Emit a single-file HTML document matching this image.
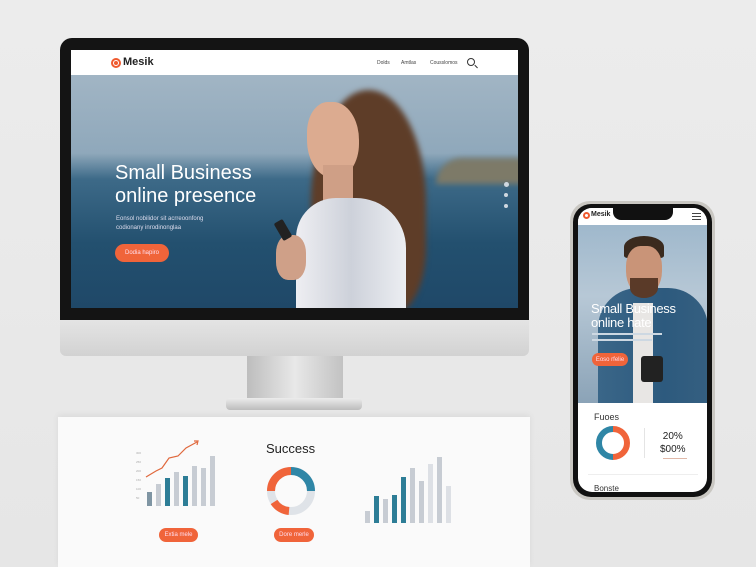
<!DOCTYPE html>
<html><head><meta charset="utf-8"><style>
*{margin:0;padding:0;box-sizing:border-box}
body{width:756px;height:567px;background:linear-gradient(180deg,#ececec,#e6e6e6);position:relative;overflow:hidden;font-family:"Liberation Sans",sans-serif}
.abs{position:absolute}
.btn{position:absolute;background:#f0643a;color:#fde;border-radius:12px;font-size:6px;display:flex;align-items:center;justify-content:center}
</style></head><body>
<!-- monitor -->
<div class="abs" style="left:60px;top:38px;width:469px;height:284px;background:#141414;border-radius:12px 12px 0 0"></div>
<div class="abs" style="left:60px;top:320px;width:469px;height:36px;background:linear-gradient(#e4e4e4,#d2d2d2);border-radius:0 0 6px 6px"></div>
<div class="abs" style="left:247px;top:356px;width:96px;height:44px;background:linear-gradient(90deg,#bdbdbd,#e8e8e8 50%,#c2c2c2)"></div>
<div class="abs" style="left:226px;top:398px;width:136px;height:12px;background:linear-gradient(#ececec,#bcbcbc);border-radius:4px"></div>
<div class="abs" style="left:71px;top:50px;width:447px;height:258px;overflow:hidden;background:linear-gradient(180deg,#a7b9c7 0%,#8fa8bb 40%,#3d6a88 50%,#23506f 75%,#1f4868 100%)">
 <div class="abs" style="left:0;top:0;width:447px;height:25px;background:#fff"></div>
 <div class="abs" style="left:40px;top:8px;width:10px;height:10px;border-radius:50%;border:2.5px solid #ef5a2f"></div>
 <div class="abs" style="left:43px;top:11px;width:4px;height:4px;border-radius:50%;background:#ef5a2f"></div>
 <div class="abs" style="left:52px;top:6px;font-size:11px;font-weight:bold;color:#222">Mesik</div>
 <div class="abs" style="left:306px;top:10px;font-size:5px;color:#444">Dolds</div>
 <div class="abs" style="left:330px;top:10px;font-size:5px;color:#444">Amtlas</div>
 <div class="abs" style="left:359px;top:10px;font-size:5px;color:#444">Cousslomos</div>
 <div class="abs" style="left:396px;top:8px;width:8px;height:8px;border-radius:50%;border:1.3px solid #333"></div>
 <div class="abs" style="left:403px;top:16px;width:4px;height:1.4px;background:#333;transform:rotate(45deg)"></div>
 <div class="abs" style="left:365px;top:108px;width:100px;height:26px;background:#7d7a68;border-radius:40px 30px 0 0;filter:blur(3px)"></div>
 <!-- woman -->
 <div class="abs" style="left:240px;top:40px;width:115px;height:225px;background:#5e3d28;border-radius:50% 50% 30% 50%;filter:blur(3px)"></div>
 <div class="abs" style="left:236px;top:52px;width:52px;height:76px;background:#dcab90;border-radius:40% 50% 45% 50%"></div>
 <div class="abs" style="left:252px;top:115px;width:30px;height:40px;background:#cf9f86"></div>
 <div class="abs" style="left:225px;top:148px;width:110px;height:120px;background:linear-gradient(90deg,#eeeef2,#cdd1da,#eceef2);border-radius:40px 50px 0 0"></div>
 <div class="abs" style="left:205px;top:185px;width:30px;height:45px;background:#cfa088;border-radius:40%"></div>
 <div class="abs" style="left:207px;top:170px;width:10px;height:20px;background:#222;border-radius:2px;transform:rotate(-30deg)"></div>
 <div class="abs" style="left:44px;top:112px;font-size:20px;color:#fff;line-height:23px">Small Business<br>online presence</div>
 <div class="abs" style="left:45px;top:165px;font-size:6px;color:#dde;line-height:9px">Eonsol nobilidor sit acrreoonfong<br>codionany inrodinonglaa</div>
 <div class="btn" style="left:44px;top:194px;width:54px;height:18px;border-radius:9px">Dodia hapiro</div>
 <div class="abs" style="left:433px;top:132px;width:5px;height:5px;border-radius:50%;background:#cfd8e0"></div>
 <div class="abs" style="left:433px;top:143px;width:4px;height:4px;border-radius:50%;background:#cfd8e0"></div>
 <div class="abs" style="left:433px;top:154px;width:4px;height:4px;border-radius:50%;background:#cfd8e0"></div>
</div>
<!-- bottom panel -->
<div class="abs" style="left:58px;top:417px;width:472px;height:150px;background:#fafafa;box-shadow:0 -2px 6px rgba(0,0,0,.06)"></div>
<svg class="abs" style="left:130px;top:438px" width="90" height="80">
 <g fill="#aaa" font-size="3" font-family="Liberation Sans"><text x="6" y="16">300</text><text x="6" y="25">250</text><text x="6" y="34">200</text><text x="6" y="43">150</text><text x="6" y="52">100</text><text x="6" y="61">50</text></g>
 <g fill="#c7ccd3"><rect x="17" y="54" width="5" height="14" fill="#7f95a3"/><rect x="26" y="46" width="5" height="22"/><rect x="35" y="40" width="5" height="28" fill="#2d7d96"/><rect x="44" y="34" width="5" height="34"/><rect x="53" y="38" width="5" height="30" fill="#2d7d96"/><rect x="62" y="28" width="5" height="40"/><rect x="71" y="30" width="5" height="38"/><rect x="80" y="18" width="5" height="50"/></g>
 <polyline points="16,39 26,33 32,30 39,20 48,18 56,10 67,4" fill="none" stroke="#e0683c" stroke-width="1.2"/>
 <path d="M64 3 L68 3 L67 7" fill="none" stroke="#e0683c" stroke-width="1.2"/>
</svg>
<div class="btn" style="left:159px;top:528px;width:39px;height:14px">Extia mele</div>
<div class="abs" style="left:266px;top:441px;font-size:13px;color:#222">Success</div>
<svg class="abs" style="left:265px;top:465px" width="52" height="52" viewBox="0 0 52 52">
 <g fill="none" stroke-width="8"><circle cx="26" cy="26" r="20" stroke="#dfe3e8"/>
 <path d="M26 6 A20 20 0 0 1 46 26" stroke="#2f86a6"/><path d="M6 26 A20 20 0 0 1 26 6" stroke="#f0643a"/><path d="M9 37 A20 20 0 0 0 24 46" stroke="#f0643a"/></g>
</svg>
<div class="btn" style="left:274px;top:528px;width:40px;height:14px">Dore merle</div>
<svg class="abs" style="left:350px;top:455px" width="110" height="75">
 <g fill="#c7ccd3"><rect x="15" y="56" width="5" height="12"/><rect x="24" y="41" width="5" height="27" fill="#2d7d96"/><rect x="33" y="44" width="5" height="24"/><rect x="42" y="40" width="5" height="28" fill="#2d7d96"/><rect x="51" y="22" width="5" height="46" fill="#2d7d96"/><rect x="60" y="13" width="5" height="55"/><rect x="69" y="26" width="5" height="42"/><rect x="78" y="9" width="5" height="59" fill="#dde0e5"/><rect x="87" y="2" width="5" height="66"/><rect x="96" y="31" width="5" height="37" fill="#dde0e5"/></g>
</svg>
<!-- phone -->
<div class="abs" style="left:570px;top:201px;width:145px;height:299px;background:#c9c7c2;border-radius:20px"></div>
<div class="abs" style="left:573px;top:204px;width:139px;height:293px;background:#111;border-radius:18px"></div>
<div class="abs" style="left:578px;top:208px;width:129px;height:284px;background:#fff;border-radius:14px;overflow:hidden">
 <div class="abs" style="left:0;top:17px;width:129px;height:178px;background:linear-gradient(180deg,#9fb8cc,#b7c8d6 40%,#8ba3b7)"></div>
 <div class="abs" style="left:20px;top:80px;width:110px;height:115px;background:linear-gradient(90deg,#3a6688,#2d5a7e 60%,#355f80);border-radius:40px 40px 0 0"></div>
 <div class="abs" style="left:55px;top:95px;width:20px;height:100px;background:#e8e6e4"></div>
 <div class="abs" style="left:46px;top:28px;width:40px;height:22px;background:#3a2a1e;border-radius:50% 50% 10% 10%"></div>
 <div class="abs" style="left:48px;top:38px;width:36px;height:50px;background:#c99478;border-radius:40% 40% 50% 50%"></div>
 <div class="abs" style="left:52px;top:70px;width:28px;height:20px;background:#5a3a28;border-radius:0 0 50% 50%"></div>
 <div class="abs" style="left:63px;top:148px;width:22px;height:26px;background:#222;border-radius:3px"></div>
 <div class="abs" style="left:0;top:0;width:129px;height:17px;background:#fff"></div>
 <div class="abs" style="left:5px;top:4px;width:7px;height:7px;border-radius:50%;border:2px solid #ef5a2f"></div>
 <div class="abs" style="left:13px;top:3px;font-size:7px;font-weight:bold;color:#222">Mesik</div>
 <div class="abs" style="left:114px;top:5px;width:9px;height:7px;border-top:1.2px solid #444;border-bottom:1.2px solid #444"></div>
 <div class="abs" style="left:114px;top:8px;width:9px;height:1.2px;background:#444"></div>
 <div class="abs" style="left:35px;top:0;width:60px;height:12px;background:#111;border-radius:0 0 8px 8px"></div>
 <div class="abs" style="left:13px;top:94px;font-size:13px;color:#fff;line-height:14px;letter-spacing:-.3px">Small Business<br>online hate</div>
 <div class="abs" style="left:14px;top:125px;width:70px;height:2px;background:#cdd8e2"></div>
 <div class="abs" style="left:14px;top:131px;width:60px;height:2px;background:#cdd8e2"></div>
 <div class="btn" style="left:14px;top:145px;width:36px;height:13px">Eoso rfelie</div>
 <div class="abs" style="left:16px;top:204px;font-size:9px;color:#333">Fuoes</div>
 <svg class="abs" style="left:18px;top:218px" width="34" height="34" viewBox="0 0 34 34"><g fill="none" stroke-width="6"><path d="M17 3 A14 14 0 0 1 17 31" stroke="#f0643a"/><path d="M17 31 A14 14 0 0 1 17 3" stroke="#2f86a6"/></g></svg>
 <div class="abs" style="left:66px;top:220px;width:1px;height:30px;background:#e4e4e4"></div>
 <div class="abs" style="left:82px;top:222px;font-size:10px;color:#222;line-height:13px;text-align:center">20%<br>$00%</div>
 <div class="abs" style="left:85px;top:250px;width:24px;height:1px;background:#e0b8a8"></div>
 <div class="abs" style="left:10px;top:266px;width:110px;height:1px;background:#eee"></div>
 <div class="abs" style="left:16px;top:276px;font-size:8px;color:#333">Bonste</div>
</div>
</body></html>
